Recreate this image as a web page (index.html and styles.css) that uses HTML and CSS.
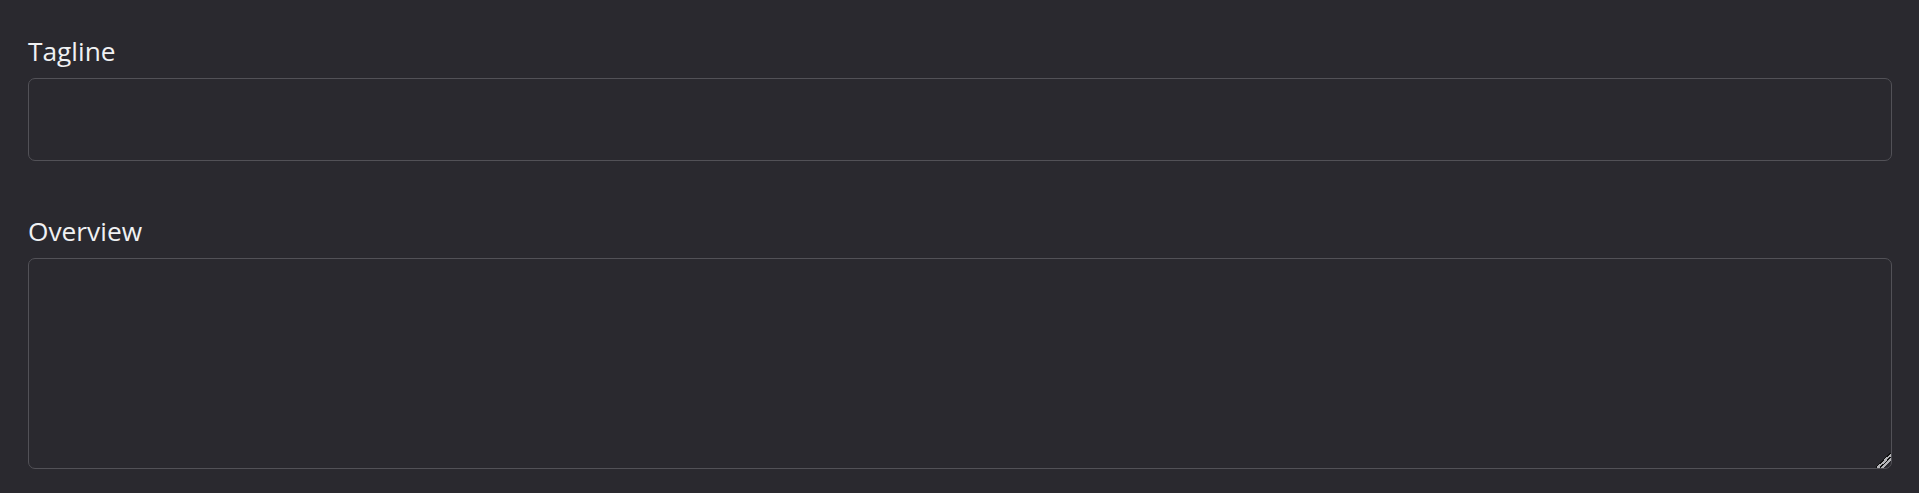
FILE: index.html
```html
<!DOCTYPE html>
<html lang="en">
<head>
  <meta charset="UTF-8" />
  <title>Edit details</title>
  <link rel="stylesheet" href="styles.css">
</head>
<body>
  <form class="details-form">
    <div class="field">
      <label for="tagline">Tagline</label>
      <input type="text" id="tagline" name="tagline" />
    </div>
    <div class="field">
      <label for="overview">Overview</label>
      <textarea id="overview" name="overview"></textarea>
    </div>
  </form>
</body>
</html>
```

FILE: styles.css
```css
body {
  margin: 0;
  background: #2a292f;
  color: #f0f1f3;
  font-family: "Open Sans", "Noto Sans", sans-serif;
  color-scheme: dark;
}

.details-form {
  display: flex;
  flex-direction: column;
  gap: 52px;
  padding: 33px 27px 0 28px;
}

.field {
  display: flex;
  flex-direction: column;
}

.field label {
  font-size: 26.3px;
  line-height: 36px;
  margin-bottom: 9px;
}

.field input,
.field textarea {
  box-sizing: border-box;
  width: 100%;
  margin: 0;
  background: #2a292f;
  color: #f0f1f3;
  border: 1px solid #525157;
  border-radius: 7px;
  font: inherit;
  font-size: 20px;
  padding: 8px 12px;
  outline: none;
}

.field input {
  height: 83px;
}

.field textarea {
  height: 211px;
  resize: vertical;
}

/* handle like the dark windows one */
.field textarea::-webkit-resizer {
  background: linear-gradient(135deg,
    transparent 0 46%,
    #111 46% 50%,
    #b4b4b8 50% 60%,
    #111 60% 64%,
    #b4b4b8 64% 74%,
    transparent 74%);
}
```
